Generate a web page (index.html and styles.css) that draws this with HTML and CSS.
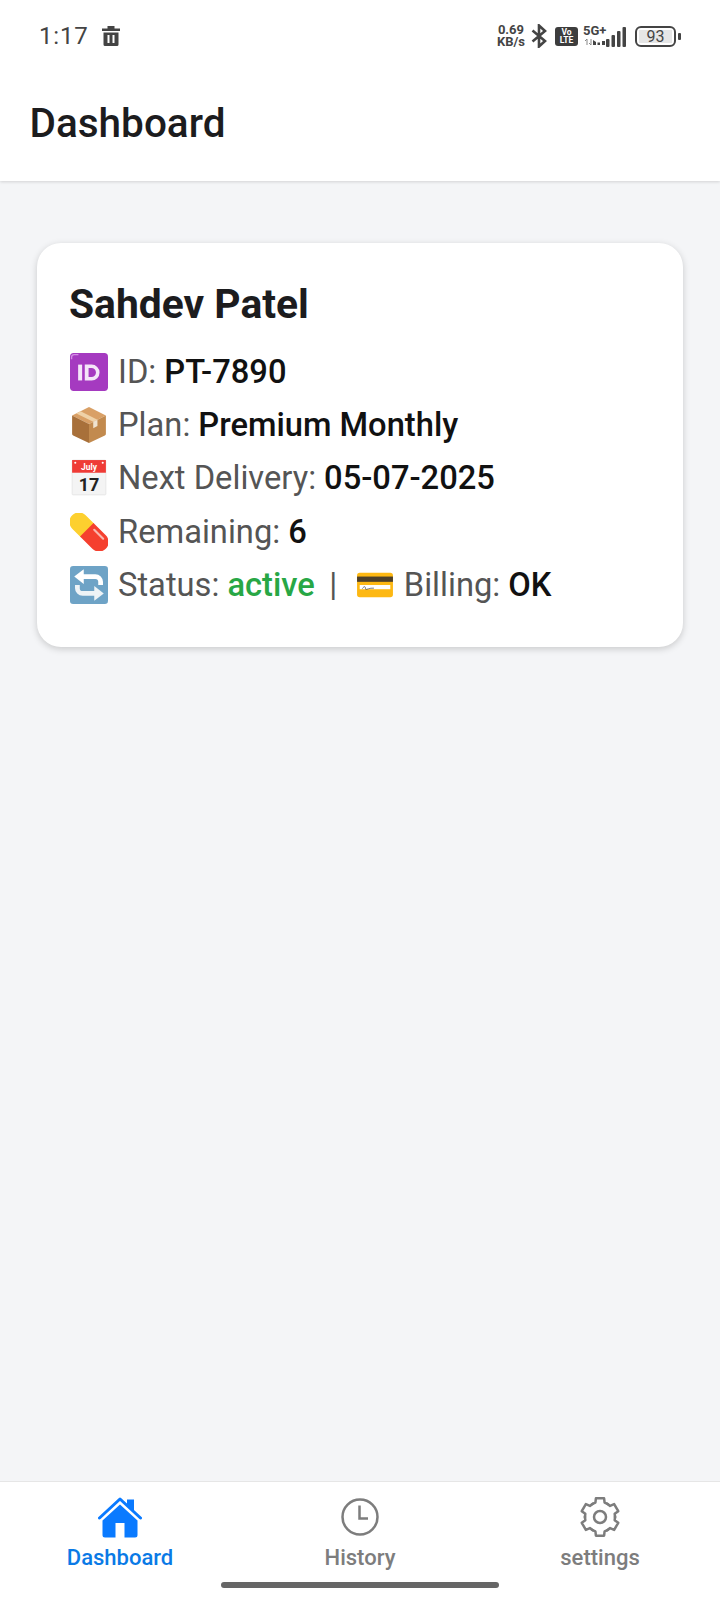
FILE: index.html
```html
<!DOCTYPE html>
<html lang="en">
<head>
<meta charset="utf-8">
<title>Dashboard</title>
<link rel="stylesheet" href="styles.css">
</head>
<body>
<div class="app">
  <header class="top">
    <div class="status">
      <div class="status-left">
        <span class="time">1:17</span>
        <svg class="trash" viewBox="0 0 20 20"><path d="M6.500 0h7v2.500H19V5H1V2.500h5.500z"/><path fill-rule="evenodd" d="M2.500 6.500h15v12A1.500 1.500 0 0 1 16 20H4a1.500 1.500 0 0 1-1.500-1.500zM6.500 9v8h2V9zm5 0v8h2V9z"/></svg>
      </div>
      <div class="status-right">
        <span class="speed"><b>0.69</b><b>KB/s</b></span>
        <svg class="bt" viewBox="0 0 16 24"><path d="M1.500 6.500L14 17l-6 5.500V1.500L14 7 1.500 17.500" fill="none" stroke="#444" stroke-width="2.600"/></svg>
        <span class="volte"><i>Vo</i><i>LTE</i></span>
        <span class="net">
          <span class="net-text"><b>5G+</b><svg class="mini" viewBox="0 0 22 8"><path d="M1 3l2-2v6M5 5l2 2V1" fill="none" stroke="#888" stroke-width="1"/><path d="M9 7V2l3 2v3zM13.500 7V4.500h2.500V7zM18 7V3h3v4z" fill="#444"/></svg></span>
          <svg class="bars" viewBox="0 0 20 20"><rect x="0" y="12" width="3.500" height="8" rx="1"/><rect x="5.500" y="8" width="3.500" height="12" rx="1"/><rect x="11" y="4" width="3.500" height="16" rx="1"/><rect x="16.500" y="0" width="3.500" height="20" rx="1"/></svg>
        </span>
        <span class="battery"><span class="battery-body"><span class="battery-fill">93</span></span><span class="battery-tip"></span></span>
      </div>
    </div>
    <h1 class="title">Dashboard</h1>
  </header>

  <main class="content">
    <section class="card">
      <h2 class="name">Sahdev Patel</h2>
      <p class="row">
        <svg class="emoji" viewBox="0 0 36 36"><rect x="0" y="0" width="36" height="36" rx="3.500" fill="#a53ac0"/><path d="M1.500 6V4a2.500 2.500 0 0 1 2.500-2.500h4" stroke="#d58ee6" stroke-width="1.300" fill="none"/><rect x="7.700" y="11" width="3.800" height="15" fill="#f4e6f8"/><path fill-rule="evenodd" d="M14 11h6.500a7.500 7.500 0 0 1 0 15H14zM17.600 14.200v8.600h2.700a4.300 4.300 0 0 0 0-8.600z" fill="#f4e6f8"/></svg>
        <span class="lab">ID:</span><strong>PT-7890</strong>
      </p>
      <p class="row">
        <svg class="emoji" viewBox="0 0 36 36"><path d="M18 1L34 9 18 17 2 9z" fill="#d9a066"/><path d="M2 9l16 8v18L3 28a2 2 0 0 1-1-2z" fill="#a8703a"/><path d="M34 9L18 17v18l15-7a2 2 0 0 0 1-2z" fill="#c28a4e"/><path d="M10 5l16 8-4 2L6 7z" fill="#efd2a8"/><path d="M22 15l4-2v6l-4 2z" fill="#efe3d0"/></svg>
        <span class="lab">Plan:</span><strong>Premium Monthly</strong>
      </p>
      <p class="row">
        <svg class="emoji" viewBox="0 0 36 36"><rect x="2" y="1" width="32" height="33" rx="1" fill="#f4f4f4" stroke="#ddd" stroke-width=".6"/><rect x="2" y="1" width="32" height="12" fill="#ef3b36"/><circle cx="5" cy="3.500" r="1" fill="#fff"/><circle cx="31" cy="3.500" r="1" fill="#fff"/><text x="18" y="10.500" class="cal-m">July</text><text x="18" y="30" class="cal-d">17</text></svg>
        <span class="lab">Next Delivery:</span><strong>05-07-2025</strong>
      </p>
      <p class="row">
        <svg class="emoji" viewBox="0 0 36 36"><g transform="rotate(45 18 18)"><path d="M16 9H4.500a9 9 0 0 0 0 18H16z" fill="#fdd02f"/><path d="M15 9h16.500a9 9 0 0 1 0 18H15z" fill="#f5402f"/><path d="M20 13h12" stroke="#f9b7ae" stroke-width="2" stroke-linecap="round"/></g></svg>
        <span class="lab">Remaining:</span><strong>6</strong>
      </p>
      <p class="row">
        <svg class="emoji" viewBox="0 0 36 36"><rect width="36" height="36" rx="3" fill="#6ea3c6"/><path d="M29 18v-3a5 5 0 0 0-5-5H12" fill="none" stroke="#fff" stroke-width="4.500"/><path d="M13 3L4 10l9 7z" fill="#fff"/><path d="M7 18v3a5 5 0 0 0 5 5h12" fill="none" stroke="#eef3f6" stroke-width="4.500"/><path d="M23 19l9 7-9 7z" fill="#eef3f6"/></svg>
        <span class="lab">Status:</span><strong class="active">active</strong>
        <span class="sep">|</span>
        <svg class="emoji" viewBox="0 0 36 36"><rect x="1" y="6.500" width="34" height="23" rx="2.500" fill="#fdb813"/><rect x="1" y="10" width="34" height="5" fill="#4c3f2a"/><rect x="3.500" y="18" width="29" height="4" fill="#fff"/><path d="M6 21.500c2-3 3-2 3 0s3-1 8-.5" stroke="#333" stroke-width=".6" fill="none"/></svg>
        <span class="lab">Billing:</span><strong>OK</strong>
      </p>
    </section>
  </main>

  <nav class="nav">
    <a class="tab tab-on">
      <svg class="tab-icon" viewBox="0 0 44 41"><path d="M1.500 21L22 2l20.500 19" fill="none" stroke="#0a7aff" stroke-width="3" stroke-linecap="round" stroke-linejoin="round"/><path d="M29 2.500h7v11.500l-7-6.500z" fill="#0a7aff"/><path d="M22 7.500L39.500 23.500V38a2.500 2.500 0 0 1-2.500 2.500H26.500V26h-9v14.500H7A2.500 2.500 0 0 1 4.500 38V23.500z" fill="#0a7aff"/></svg>
      <span>Dashboard</span>
    </a>
    <a class="tab">
      <svg class="tab-icon" viewBox="0 0 44 41"><circle cx="22" cy="20" r="17.500" fill="none" stroke="#7d7d7d" stroke-width="2.500"/><path d="M21.500 8.500v13H30" fill="none" stroke="#7d7d7d" stroke-width="2.500"/></svg>
      <span>History</span>
    </a>
    <a class="tab">
      <svg class="tab-icon" viewBox="0 0 44 41">
        <defs><path id="gear-tooth" d="M14 7.200L17.400 5.700 17.900 1.300H26.100L26.600 5.700 30 7.200"/></defs>
        <circle cx="22" cy="20" r="6" fill="none" stroke="#7d7d7d" stroke-width="2.500"/>
        <g fill="none" stroke="#7d7d7d" stroke-width="2.500" stroke-linejoin="round" stroke-linecap="round">
          <use href="#gear-tooth"/>
          <use href="#gear-tooth" transform="rotate(60 22 20)"/>
          <use href="#gear-tooth" transform="rotate(120 22 20)"/>
          <use href="#gear-tooth" transform="rotate(180 22 20)"/>
          <use href="#gear-tooth" transform="rotate(240 22 20)"/>
          <use href="#gear-tooth" transform="rotate(300 22 20)"/>
        </g>
      </svg>
      <span>settings</span>
    </a>
    <div class="home-bar"></div>
  </nav>
</div>
</body>
</html>
```

FILE: styles.css
```css
* { box-sizing: border-box; }
html, body { margin: 0; padding: 0; }
body { font-family: Roboto, "Liberation Sans", sans-serif; background: #f4f5f7; }
.app { width: 720px; height: 1600px; display: flex; flex-direction: column; }

.top { background: #fff; height: 181px; box-shadow: 0 1px 3px rgba(0,0,0,.14); flex: none; position: relative; z-index: 1; }
.status { height: 72px; display: flex; justify-content: space-between; align-items: center; padding: 0 39px 0 39px; }
.status-left { display: flex; align-items: center; gap: 13px; }
.time { font-size: 24px; color: #444; letter-spacing: .8px; }
.trash { width: 20px; height: 20px; fill: #444; }
.status-right { display: flex; align-items: center; color: #444; }
.speed { display: flex; flex-direction: column; align-items: center; font-size: 13px; line-height: 12.500px; }
.speed b { font-weight: 700; }
.bt { width: 16px; height: 24px; margin: 0 7px 0 6px; }
.volte { width: 23px; height: 19px; background: #3d3d3d; border-radius: 3px; display: flex; flex-direction: column; align-items: center; justify-content: center; margin-left: 1px; }
.volte i { font-style: normal; font-weight: 700; font-size: 8.500px; line-height: 8.500px; color: #fff; }
.net { display: flex; align-items: flex-end; margin-left: 5px; }
.net-text { display: flex; flex-direction: column; width: 23px; font-size: 13px; line-height: 12px; }
.net-text b { font-weight: 700; }
.mini { width: 22px; height: 8px; margin: 1px 0 1px 1px; }
.bars { width: 20px; height: 20px; fill: #444; }
.battery { display: flex; align-items: center; margin-left: 9px; }
.battery-body { width: 41px; height: 21px; border: 2px solid #444; border-radius: 6px; padding: 2px; display: flex; }
.battery-fill { width: 33px; background: #e6e6e6; font-size: 16px; line-height: 13px; text-align: center; color: #444; }
.battery-tip { width: 3px; height: 7px; background: #444; margin-left: 2px; border-radius: 1px; }

.title { margin: 0; padding-left: 29.500px; font-size: 40.500px; line-height: 102px; font-weight: 500; color: #1c1c1e; }

.content { flex: 1; padding: 62px 37px 0; }
.card { background: #fff; border-radius: 24px; padding: 33px 33px 34px; height: 404px; box-shadow: 0 2px 7px rgba(0,0,0,.18); }
.name { margin: 0 0 13px -1px; font-size: 40.800px; line-height: 56px; font-weight: 700; color: #1c1c1e; }
.row { margin: 0; display: flex; align-items: center; height: 53.400px; font-size: 32.700px; color: #555; white-space: pre; }
.emoji { width: 38px; height: 38px; flex: none; margin-right: 10px; }
.row strong { font-weight: 500; color: #111; margin-left: 8px; }
.row strong.active { color: #28a745; }
.sep { margin: 0 18.500px 0 14.500px; }
.cal-m { font: 700 8px Roboto, sans-serif; fill: #fff; text-anchor: middle; }
.cal-d { font: 700 17px Roboto, sans-serif; fill: #222; text-anchor: middle; }

.nav { flex: none; height: 119px; background: #fff; border-top: 1px solid #e6e6e6; display: grid; grid-template-columns: repeat(3, 1fr); position: relative; padding-top: 15px; }
.tab { display: flex; flex-direction: column; align-items: center; gap: 7px; color: #7d7d7d; font-size: 22px; font-weight: 500; }
.tab-on { color: #0a7ae6; }
.tab-icon { width: 44px; height: 41px; }
.home-bar { position: absolute; left: 221px; bottom: 12px; width: 278px; height: 6px; border-radius: 3px; background: #666; }
```
